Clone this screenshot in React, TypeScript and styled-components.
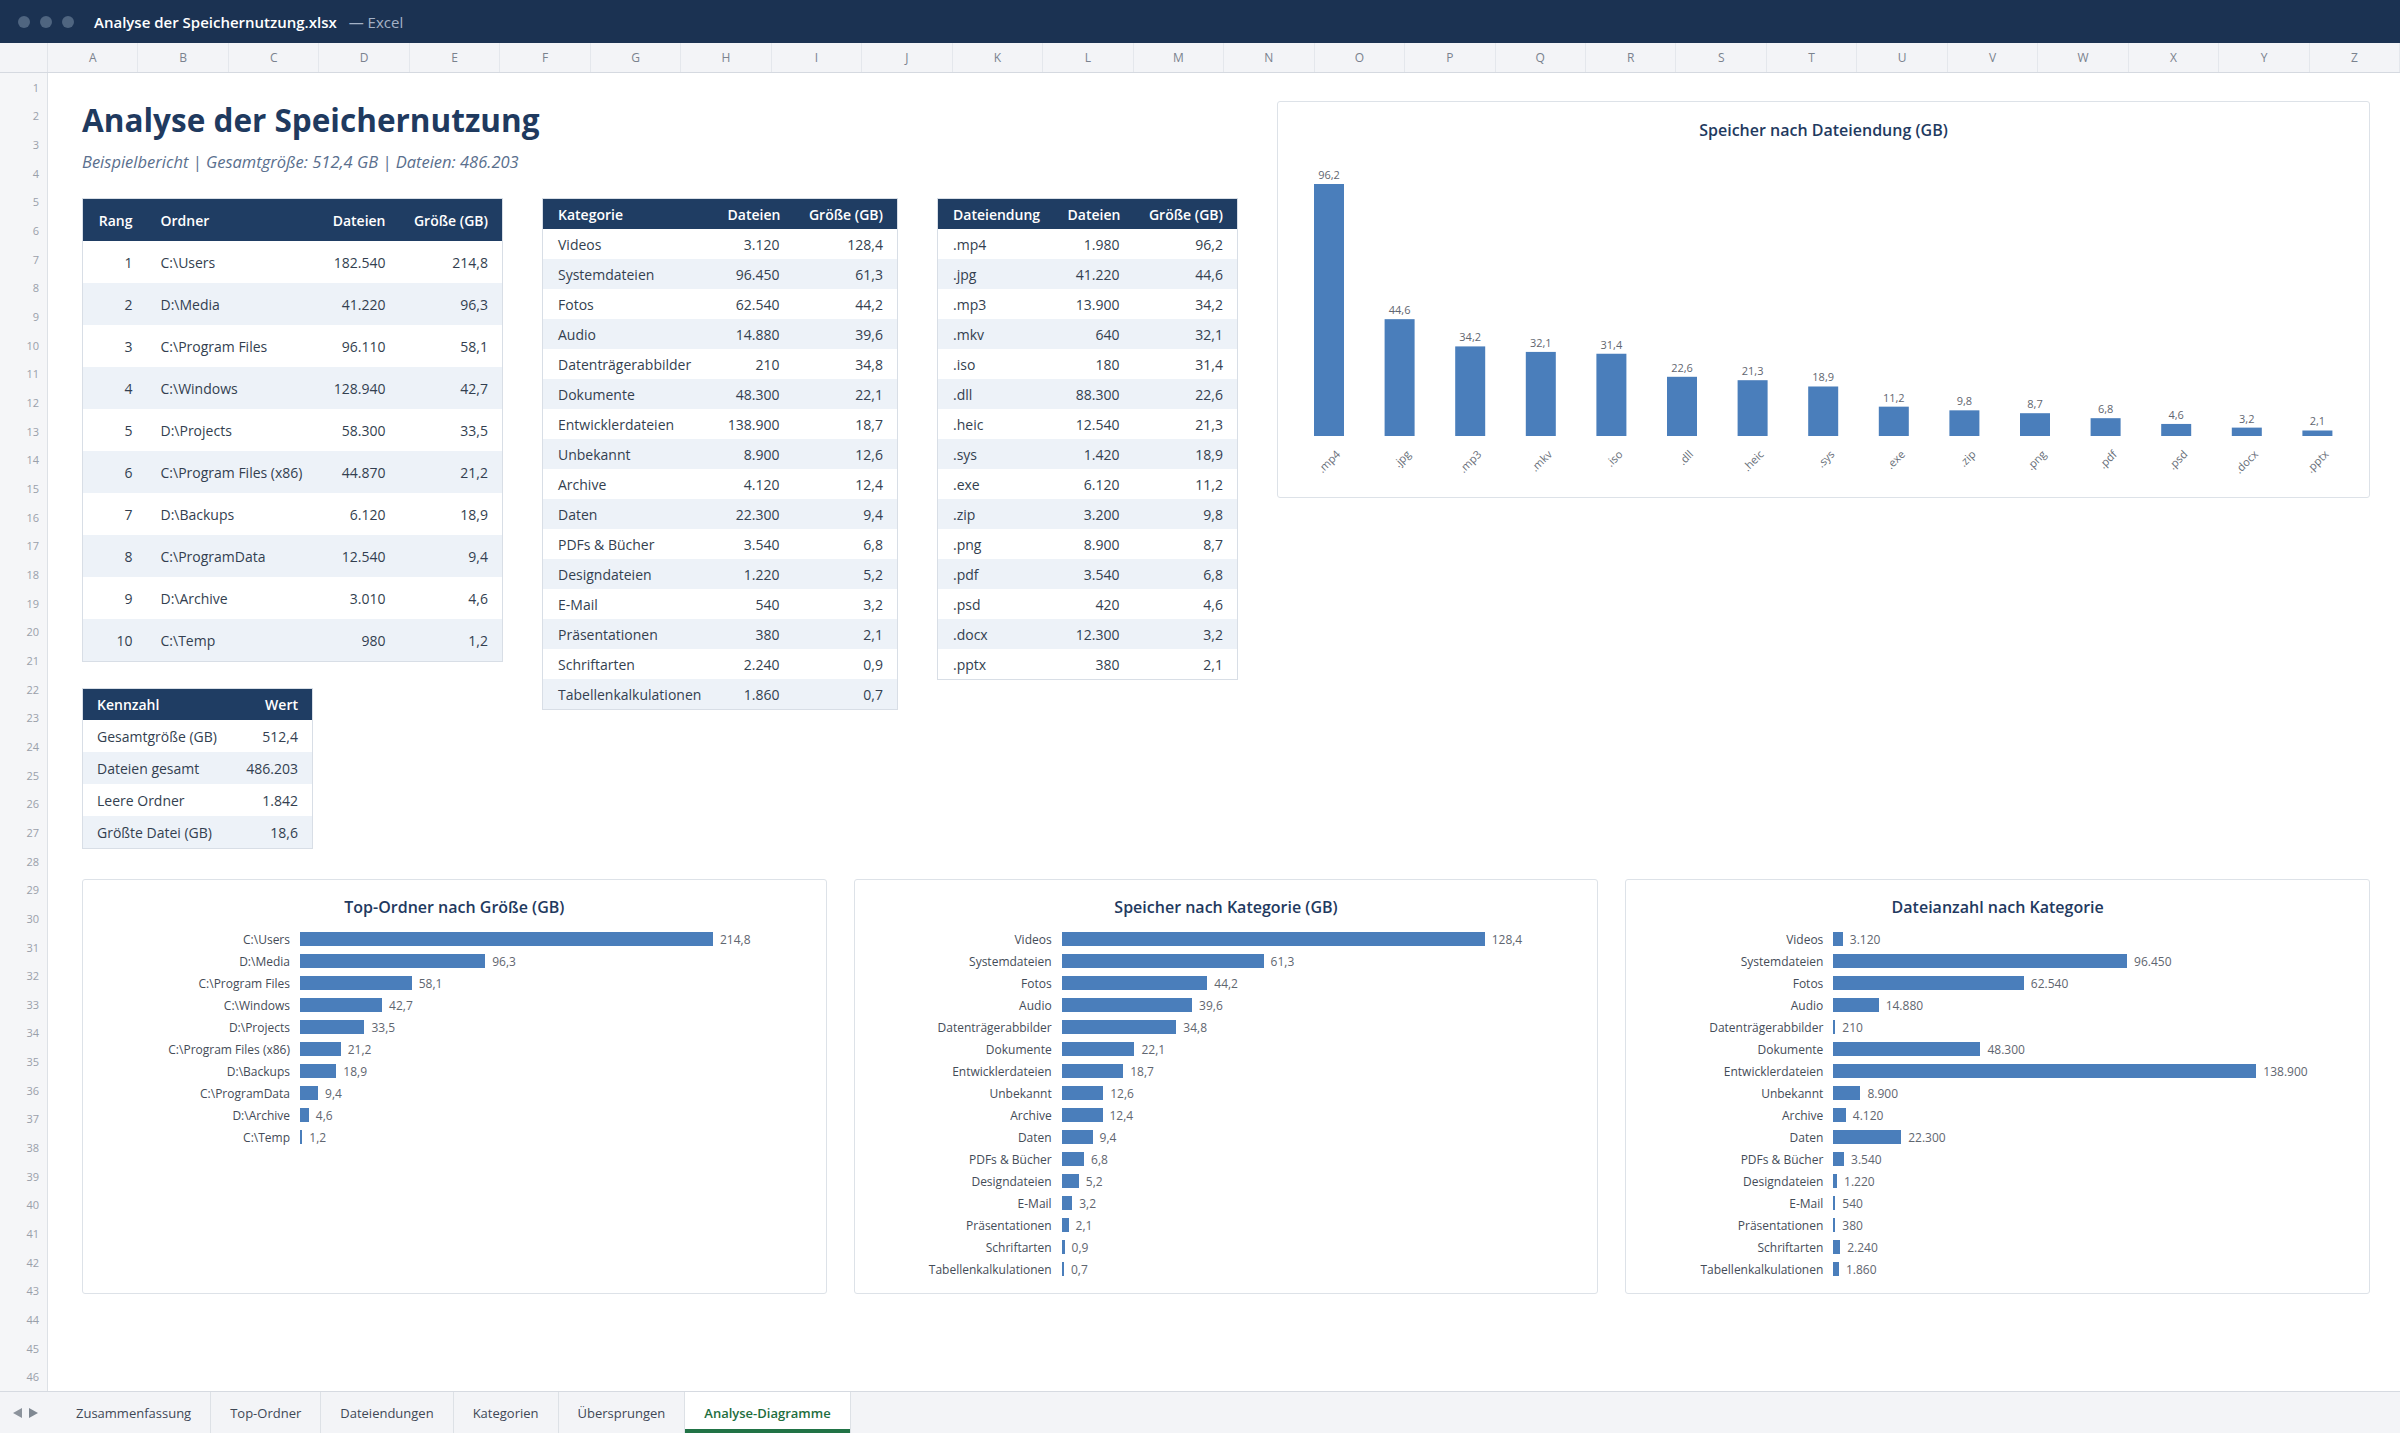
import React from 'react';
import styled, { createGlobalStyle } from 'styled-components';

const GlobalStyle = createGlobalStyle`
  html, body {
    margin: 0;
    padding: 0;
    background: #ffffff;
  }

  body {
    font-family: 'Open Sans', 'Noto Sans', sans-serif;
    color: #333f50;
  }
`;

const Window = styled.div`
  width: 2400px;
  height: 1433px;
  display: flex;
  flex-direction: column;
  overflow: hidden;
`;

const TitleBar = styled.div`
  height: 43px;
  flex: none;
  background: #1b3252;
  display: flex;
  align-items: center;
  padding-left: 18px;
`;

const Dots = styled.div`
  display: flex;
  gap: 10px;
  margin-right: 20px;
`;

const Dot = styled.span`
  width: 12px;
  height: 12px;
  border-radius: 50%;
  background: #4f6580;
`;

const FileName = styled.span`
  font-size: 15px;
  font-weight: 600;
  color: #ffffff;
`;

const AppName = styled.span`
  font-size: 15px;
  color: #a3b1c6;
  margin-left: 12px;
`;

const ColumnHeader = styled.div`
  height: 29px;
  flex: none;
  display: flex;
  background: #f3f4f7;
  border-bottom: 1px solid #d5d9e0;
`;

const Corner = styled.div`
  width: 47px;
  flex: none;
  border-right: 1px solid #e1e4e9;
`;

const ColumnCell = styled.div`
  flex: 1;
  display: flex;
  align-items: center;
  justify-content: center;
  font-size: 12px;
  color: #7a828e;
  border-right: 1px solid #e4e7ec;
`;

const Sheet = styled.div`
  flex: 1;
  min-height: 0;
  display: flex;
`;

const Gutter = styled.div`
  width: 47px;
  flex: none;
  background: #f5f6f8;
  border-right: 1px solid #dde1e6;
  display: flex;
  flex-direction: column;
`;

const RowNumber = styled.div`
  flex: 1;
  display: flex;
  align-items: center;
  justify-content: flex-end;
  padding-right: 8px;
  font-size: 11px;
  color: #9aa0aa;
`;

const Content = styled.div`
  flex: 1;
  padding: 27px 30px 0 34px;
  display: flex;
  flex-direction: column;
`;

const TopSection = styled.div`
  display: flex;
  justify-content: space-between;
  align-items: flex-start;
`;

const LeftPane = styled.div`
  display: flex;
  flex-direction: column;
`;

const Heading = styled.h1`
  margin: 0;
  font-size: 31.5px;
  line-height: 40px;
  font-weight: 700;
  color: #1f3a5f;
`;

const Subtitle = styled.div`
  margin-top: 12px;
  font-size: 16.5px;
  line-height: 20px;
  font-style: italic;
  color: #5a6f8e;
`;

const TablesRow = styled.div`
  margin-top: 26px;
  display: flex;
  align-items: flex-start;
  gap: 39px;
`;

const Stack = styled.div`
  display: flex;
  flex-direction: column;
  gap: 26px;
`;

const Table = styled.table<{ $width: number; $head: number; $row: number }>`
  width: ${(p) => p.$width}px;
  table-layout: fixed;
  border-collapse: collapse;
  border: 1px solid #d8dee6;
  font-size: 14px;

  th {
    height: ${(p) => p.$head}px;
    background: #1f3d63;
    color: #ffffff;
    font-weight: 600;
  }

  td {
    height: ${(p) => p.$row}px;
    color: #333f50;
  }

  th,
  td {
    padding: 0 14px;
    white-space: nowrap;
  }

  tbody tr:nth-child(even) td {
    background: #edf2f8;
  }
`;

const Cell = styled.td<{ $right?: boolean; $pad?: number }>`
  text-align: ${(p) => (p.$right ? 'right' : 'left')};
  ${(p) => (p.$pad ? `padding-left: ${p.$pad}px !important;` : '')}
`;

const HeadCell = styled.th<{ $right?: boolean; $pad?: number }>`
  text-align: ${(p) => (p.$right ? 'right' : 'left')};
  ${(p) => (p.$pad ? `padding-left: ${p.$pad}px !important;` : '')}
`;

const RightPane = styled.div`
  margin-top: 1px;
`;

const ChartCard = styled.div<{ $width?: number; $height: number }>`
  box-sizing: border-box;
  width: ${(p) => (p.$width ? `${p.$width}px` : 'auto')};
  height: ${(p) => p.$height}px;
  border: 1px solid #dde2e8;
  border-radius: 3px;
  background: #ffffff;
  display: flex;
  flex-direction: column;
`;

const ChartTitle = styled.div<{ $top?: number }>`
  padding-top: ${(p) => p.$top ?? 16}px;
  font-size: 16px;
  line-height: 24px;
  font-weight: 600;
  text-align: center;
  color: #1f3a5f;
`;

const BottomSection = styled.div`
  margin-top: 30px;
  display: grid;
  grid-template-columns: repeat(3, 1fr);
  gap: 27px;
`;

const BarList = styled.div`
  margin-top: 9px;
  display: flex;
  flex-direction: column;
`;

const BarRow = styled.div<{ $labelWidth: number }>`
  height: 22px;
  display: grid;
  grid-template-columns: ${(p) => p.$labelWidth}px 1fr;
  column-gap: 10px;
  align-items: center;
  font-size: 12px;
`;

const BarLabel = styled.span`
  text-align: right;
  white-space: nowrap;
  color: #444c58;
`;

const BarTrack = styled.div`
  display: flex;
  align-items: center;
`;

const Bar = styled.div`
  height: 14px;
  background: #4a7ebb;
`;

const BarValue = styled.span`
  margin-left: 7px;
  color: #5f6670;
`;

const TabBar = styled.div`
  height: 41px;
  flex: none;
  background: #f3f4f7;
  border-top: 1px solid #d6dae1;
  display: flex;
`;

const TabArrows = styled.div`
  width: 57px;
  flex: none;
  display: flex;
  align-items: center;
  padding-left: 13px;
  gap: 7px;
  box-sizing: border-box;
`;

const Arrow = styled.span<{ $dir: 'left' | 'right' }>`
  width: 0;
  height: 0;
  border-top: 5px solid transparent;
  border-bottom: 5px solid transparent;
  ${(p) =>
    p.$dir === 'left'
      ? 'border-right: 9px solid #8c939c;'
      : 'border-left: 9px solid #7f8892;'}
`;

const Tab = styled.div<{ $active?: boolean }>`
  display: flex;
  align-items: center;
  padding: 0 19px;
  font-size: 13px;
  border-right: 1px solid #dde1e6;
  color: ${(p) => (p.$active ? '#1e6e3e' : '#3f4856')};
  font-weight: ${(p) => (p.$active ? 600 : 400)};
  background: ${(p) => (p.$active ? '#ffffff' : 'transparent')};
  box-shadow: ${(p) => (p.$active ? 'inset 0 -4px 0 #217346' : 'none')};
`;

const folders = [
  { path: 'C:\\Users', files: 182540, size: 214.8 },
  { path: 'D:\\Media', files: 41220, size: 96.3 },
  { path: 'C:\\Program Files', files: 96110, size: 58.1 },
  { path: 'C:\\Windows', files: 128940, size: 42.7 },
  { path: 'D:\\Projects', files: 58300, size: 33.5 },
  { path: 'C:\\Program Files (x86)', files: 44870, size: 21.2 },
  { path: 'D:\\Backups', files: 6120, size: 18.9 },
  { path: 'C:\\ProgramData', files: 12540, size: 9.4 },
  { path: 'D:\\Archive', files: 3010, size: 4.6 },
  { path: 'C:\\Temp', files: 980, size: 1.2 },
];

const categories = [
  { name: 'Videos', files: 3120, size: 128.4 },
  { name: 'Systemdateien', files: 96450, size: 61.3 },
  { name: 'Fotos', files: 62540, size: 44.2 },
  { name: 'Audio', files: 14880, size: 39.6 },
  { name: 'Datenträgerabbilder', files: 210, size: 34.8 },
  { name: 'Dokumente', files: 48300, size: 22.1 },
  { name: 'Entwicklerdateien', files: 138900, size: 18.7 },
  { name: 'Unbekannt', files: 8900, size: 12.6 },
  { name: 'Archive', files: 4120, size: 12.4 },
  { name: 'Daten', files: 22300, size: 9.4 },
  { name: 'PDFs & Bücher', files: 3540, size: 6.8 },
  { name: 'Designdateien', files: 1220, size: 5.2 },
  { name: 'E-Mail', files: 540, size: 3.2 },
  { name: 'Präsentationen', files: 380, size: 2.1 },
  { name: 'Schriftarten', files: 2240, size: 0.9 },
  { name: 'Tabellenkalkulationen', files: 1860, size: 0.7 },
];

const extensions = [
  { ext: '.mp4', files: 1980, size: 96.2 },
  { ext: '.jpg', files: 41220, size: 44.6 },
  { ext: '.mp3', files: 13900, size: 34.2 },
  { ext: '.mkv', files: 640, size: 32.1 },
  { ext: '.iso', files: 180, size: 31.4 },
  { ext: '.dll', files: 88300, size: 22.6 },
  { ext: '.heic', files: 12540, size: 21.3 },
  { ext: '.sys', files: 1420, size: 18.9 },
  { ext: '.exe', files: 6120, size: 11.2 },
  { ext: '.zip', files: 3200, size: 9.8 },
  { ext: '.png', files: 8900, size: 8.7 },
  { ext: '.pdf', files: 3540, size: 6.8 },
  { ext: '.psd', files: 420, size: 4.6 },
  { ext: '.docx', files: 12300, size: 3.2 },
  { ext: '.pptx', files: 380, size: 2.1 },
];

const metrics = [
  ['Gesamtgröße (GB)', '512,4'],
  ['Dateien gesamt', '486.203'],
  ['Leere Ordner', '1.842'],
  ['Größte Datei (GB)', '18,6'],
];

const sheetTabs = ['Zusammenfassung', 'Top-Ordner', 'Dateiendungen', 'Kategorien', 'Übersprungen', 'Analyse-Diagramme'];

const columns = 'ABCDEFGHIJKLMNOPQRSTUVWXYZ'.split('');

// German number formats: 1.234 and 12,5
const fmtInt = (n: number) => String(n).replace(/\B(?=(\d{3})+(?!\d))/g, '.');
const fmtGb = (n: number) => n.toFixed(1).replace('.', ',');

type BarItem = { label: string; value: number; display: string };

function BarChart(props: { title: string; items: BarItem[]; labelWidth: number }) {
  const { title, items, labelWidth } = props;
  const max = Math.max(...items.map((i) => i.value));
  const barMax = 630 - labelWidth - 10;

  return (
    <ChartCard $height={415}>
      <ChartTitle $top={15}>{title}</ChartTitle>
      <BarList>
        {items.map((item) => (
          <BarRow key={item.label} $labelWidth={labelWidth}>
            <BarLabel>{item.label}</BarLabel>
            <BarTrack>
              <Bar style={{ width: Math.max(2, (item.value / max) * barMax) }} />
              <BarValue>{item.display}</BarValue>
            </BarTrack>
          </BarRow>
        ))}
      </BarList>
    </ChartCard>
  );
}

function ColumnChart() {
  const width = 1091;
  const height = 355;
  const base = 294;
  const maxH = 252;
  const slot = 70.6;
  const barW = 30;
  const max = Math.max(...extensions.map((e) => e.size));

  return (
    <ChartCard $width={1093} $height={397}>
      <ChartTitle>Speicher nach Dateiendung (GB)</ChartTitle>
      <svg width={width} height={height} fontFamily="'Open Sans', sans-serif">
        {extensions.map((e, i) => {
          const cx = 51 + i * slot;
          const h = (e.size / max) * maxH;
          return (
            <g key={e.ext}>
              <rect x={cx - barW / 2} y={base - h} width={barW} height={h} fill="#4a7ebb" />
              <text x={cx} y={base - h - 5} fontSize={11} fill="#5f6670" textAnchor="middle">
                {fmtGb(e.size)}
              </text>
              <text
                x={cx + 12}
                y={base + 19}
                fontSize={11}
                fill="#666d77"
                textAnchor="end"
                transform={`rotate(-45 ${cx + 12} ${base + 19})`}
              >
                {e.ext}
              </text>
            </g>
          );
        })}
      </svg>
    </ChartCard>
  );
}

export default function App() {
  return (
    <Window>
      <GlobalStyle />
      <TitleBar>
        <Dots>
          <Dot />
          <Dot />
          <Dot />
        </Dots>
        <FileName>Analyse der Speichernutzung.xlsx</FileName>
        <AppName>— Excel</AppName>
      </TitleBar>

      <ColumnHeader>
        <Corner />
        {columns.map((c) => (
          <ColumnCell key={c}>{c}</ColumnCell>
        ))}
      </ColumnHeader>

      <Sheet>
        <Gutter>
          {Array.from({ length: 46 }, (_, i) => (
            <RowNumber key={i}>{i + 1}</RowNumber>
          ))}
        </Gutter>

        <Content>
          <TopSection>
            <LeftPane>
              <Heading>Analyse der Speichernutzung</Heading>
              <Subtitle>Beispielbericht | Gesamtgröße: 512,4 GB | Dateien: 486.203</Subtitle>

              <TablesRow>
                <Stack>
                  <Table $width={420} $head={42} $row={42}>
                    <colgroup>
                      <col style={{ width: 64 }} />
                      <col style={{ width: 155 }} />
                      <col style={{ width: 98 }} />
                      <col style={{ width: 103 }} />
                    </colgroup>
                    <thead>
                      <tr>
                        <HeadCell $right>Rang</HeadCell>
                        <HeadCell>Ordner</HeadCell>
                        <HeadCell $right>Dateien</HeadCell>
                        <HeadCell $right>Größe (GB)</HeadCell>
                      </tr>
                    </thead>
                    <tbody>
                      {folders.map((f, i) => (
                        <tr key={f.path}>
                          <Cell $right>{i + 1}</Cell>
                          <Cell>{f.path}</Cell>
                          <Cell $right>{fmtInt(f.files)}</Cell>
                          <Cell $right>{fmtGb(f.size)}</Cell>
                        </tr>
                      ))}
                    </tbody>
                  </Table>

                  <Table $width={230} $head={31} $row={32}>
                    <colgroup>
                      <col style={{ width: 140 }} />
                      <col style={{ width: 90 }} />
                    </colgroup>
                    <thead>
                      <tr>
                        <HeadCell>Kennzahl</HeadCell>
                        <HeadCell $right>Wert</HeadCell>
                      </tr>
                    </thead>
                    <tbody>
                      {metrics.map(([k, v]) => (
                        <tr key={k}>
                          <Cell>{k}</Cell>
                          <Cell $right>{v}</Cell>
                        </tr>
                      ))}
                    </tbody>
                  </Table>
                </Stack>

                <Table $width={355} $head={30} $row={30}>
                  <colgroup>
                    <col style={{ width: 171 }} />
                    <col style={{ width: 80 }} />
                    <col style={{ width: 104 }} />
                  </colgroup>
                  <thead>
                    <tr>
                      <HeadCell $pad={15}>Kategorie</HeadCell>
                      <HeadCell $right>Dateien</HeadCell>
                      <HeadCell $right>Größe (GB)</HeadCell>
                    </tr>
                  </thead>
                  <tbody>
                    {categories.map((c) => (
                      <tr key={c.name}>
                        <Cell $pad={15}>{c.name}</Cell>
                        <Cell $right>{fmtInt(c.files)}</Cell>
                        <Cell $right>{fmtGb(c.size)}</Cell>
                      </tr>
                    ))}
                  </tbody>
                </Table>

                <Table $width={300} $head={30} $row={30}>
                  <colgroup>
                    <col style={{ width: 116 }} />
                    <col style={{ width: 80 }} />
                    <col style={{ width: 104 }} />
                  </colgroup>
                  <thead>
                    <tr>
                      <HeadCell $pad={15}>Dateiendung</HeadCell>
                      <HeadCell $right>Dateien</HeadCell>
                      <HeadCell $right>Größe (GB)</HeadCell>
                    </tr>
                  </thead>
                  <tbody>
                    {extensions.map((e) => (
                      <tr key={e.ext}>
                        <Cell $pad={15}>{e.ext}</Cell>
                        <Cell $right>{fmtInt(e.files)}</Cell>
                        <Cell $right>{fmtGb(e.size)}</Cell>
                      </tr>
                    ))}
                  </tbody>
                </Table>
              </TablesRow>
            </LeftPane>

            <RightPane>
              <ColumnChart />
            </RightPane>
          </TopSection>

          <BottomSection>
            <BarChart
              title="Top-Ordner nach Größe (GB)"
              labelWidth={207}
              items={folders.map((f) => ({ label: f.path, value: f.size, display: fmtGb(f.size) }))}
            />
            <BarChart
              title="Speicher nach Kategorie (GB)"
              labelWidth={197}
              items={categories.map((c) => ({ label: c.name, value: c.size, display: fmtGb(c.size) }))}
            />
            <BarChart
              title="Dateianzahl nach Kategorie"
              labelWidth={197}
              items={categories.map((c) => ({ label: c.name, value: c.files, display: fmtInt(c.files) }))}
            />
          </BottomSection>
        </Content>
      </Sheet>

      <TabBar>
        <TabArrows>
          <Arrow $dir="left" />
          <Arrow $dir="right" />
        </TabArrows>
        {sheetTabs.map((t) => (
          <Tab key={t} $active={t === 'Analyse-Diagramme'}>
            {t}
          </Tab>
        ))}
      </TabBar>
    </Window>
  );
}
